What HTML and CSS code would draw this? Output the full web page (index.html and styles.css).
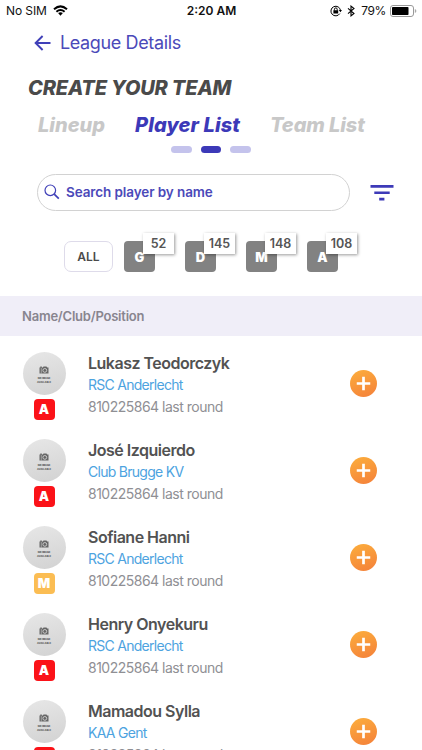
FILE: index.html
```html
<!DOCTYPE html>
<html lang="en">
<head>
    <meta charset="UTF-8">
    <meta name="viewport" content="width=device-width, initial-scale=1.0">
    <title>League Details</title>
    <link rel="stylesheet" href="styles.css">
</head>
<body>
    <!-- Shared icons -->
    <svg class="icon-defs" width="0" height="0">
        <symbol id="camera" viewBox="0 0 10 8">
            <path fill="#666" d="M.5 1.5h.8V.6h1.5v.9h1L4.5.5h3l.7 1h1.3V7.5H.5z"/>
            <circle cx="5.8" cy="4.4" r="1.9" fill="none" stroke="#ddd" stroke-width=".8"/>
            <path stroke="#ddd" stroke-width=".5" d="M2.3 2v5.5"/>
        </symbol>
        <symbol id="plus" viewBox="0 0 28 28">
            <path stroke="#fff" stroke-width="2.8" d="M14 7v14M7 14h14"/>
        </symbol>
    </svg>

    <div class="status-bar">
        <div class="carrier">
            <span>No SIM</span>
            <svg width="15" height="11" viewBox="0 0 15 11" fill="none" stroke="#000" stroke-width="2">
                <path d="M1 4.2Q7.5-1.4 14 4.2"/>
                <path d="M3.4 6.7Q7.5 3.2 11.6 6.7"/>
                <path fill="#000" stroke="none" d="M5.1 8.1Q7.5 6.2 9.9 8.1L7.5 10.7z"/>
            </svg>
        </div>
        <div class="clock">2:20 AM</div>
        <div class="indicators">
            <svg width="12" height="12" viewBox="0 0 12 12" fill="none" stroke="#000">
                <path d="M9.8 8.6A4.8 4.8 0 1 1 10.5 5.5"/>
                <path fill="#000" stroke="none" d="M8.8 5h3.2l-1.6 2.2zM3.4 5.3h4.8v3.3H3.4z"/>
                <path d="M4.4 5.5V4.3a1.4 1.4 0 0 1 2.8 0v1.2"/>
            </svg>
            <svg class="bluetooth" width="8" height="12" viewBox="0 0 8 12" fill="none" stroke="#000" stroke-width="1.1">
                <path d="M1 3.3l6 5.2-3 2.4V1.1l3 2.4-6 5.2"/>
            </svg>
            <span class="percent">79%</span>
            <svg width="27" height="12" viewBox="0 0 27 12">
                <rect x=".5" y=".5" width="23" height="11" rx="2.5" fill="#fff" stroke="#999"/>
                <rect x="2" y="2" width="16.5" height="8" rx=".8"/>
                <path fill="#aaa" d="M24.8 4q1.6.6 1.6 2t-1.6 2z"/>
            </svg>
        </div>
    </div>

    <div class="nav">
        <svg width="17" height="16" viewBox="0 0 17 16" fill="none" stroke="#4040b8" stroke-width="1.9">
            <path d="M16.5 8H2M8.6 1L1.6 8l7 7"/>
        </svg>
        <span>League Details</span>
    </div>

    <h1 class="title">CREATE YOUR TEAM</h1>

    <div class="tabs">
        <span class="tab lineup">Lineup</span>
        <span class="tab active">Player List</span>
        <span class="tab team">Team List</span>
    </div>
    <div class="dots">
        <i></i><i class="current"></i><i></i>
    </div>

    <div class="search-row">
        <div class="search">
            <svg width="16" height="16" viewBox="0 0 16 16" fill="none" stroke="#4040b8" stroke-width="1.2">
                <circle cx="6.3" cy="6.3" r="5.3"/>
                <path stroke-width="1.7" d="M10.2 10.2l4.6 4.4"/>
            </svg>
            <span>Search player by name</span>
        </div>
        <svg class="filter" width="24" height="16" viewBox="0 0 24 16" fill="#3d3ab8">
            <path d="M.5 0h23v2.8H.5zM4.3 6.4h15.4v2.7H4.3zM9.2 12.8h5.2v2.7H9.2z"/>
        </svg>
    </div>

    <div class="filters">
        <div class="all">ALL</div>
        <div class="position">G<span class="count">52</span></div>
        <div class="position">D<span class="count">145</span></div>
        <div class="position">M<span class="count">148</span></div>
        <div class="position">A<span class="count">108</span></div>
    </div>

    <div class="list-header">Name/Club/Position</div>

    <div class="players">
        <div class="player">
            <div class="picture">
                <div class="avatar"><svg><use href="#camera"/></svg><small>NO IMAGE<br>AVAILABLE</small></div>
                <div class="role">A</div>
            </div>
            <div class="info">
                <div class="name">Lukasz Teodorczyk</div>
                <div class="club">RSC Anderlecht</div>
                <div class="score">810225864 last round</div>
            </div>
            <div class="add"><svg><use href="#plus"/></svg></div>
        </div>
        <div class="player">
            <div class="picture">
                <div class="avatar"><svg><use href="#camera"/></svg><small>NO IMAGE<br>AVAILABLE</small></div>
                <div class="role">A</div>
            </div>
            <div class="info">
                <div class="name">José Izquierdo</div>
                <div class="club">Club Brugge KV</div>
                <div class="score">810225864 last round</div>
            </div>
            <div class="add"><svg><use href="#plus"/></svg></div>
        </div>
        <div class="player">
            <div class="picture">
                <div class="avatar"><svg><use href="#camera"/></svg><small>NO IMAGE<br>AVAILABLE</small></div>
                <div class="role midfielder">M</div>
            </div>
            <div class="info">
                <div class="name">Sofiane Hanni</div>
                <div class="club">RSC Anderlecht</div>
                <div class="score">810225864 last round</div>
            </div>
            <div class="add"><svg><use href="#plus"/></svg></div>
        </div>
        <div class="player">
            <div class="picture">
                <div class="avatar"><svg><use href="#camera"/></svg><small>NO IMAGE<br>AVAILABLE</small></div>
                <div class="role">A</div>
            </div>
            <div class="info">
                <div class="name">Henry Onyekuru</div>
                <div class="club">RSC Anderlecht</div>
                <div class="score">810225864 last round</div>
            </div>
            <div class="add"><svg><use href="#plus"/></svg></div>
        </div>
        <div class="player">
            <div class="picture">
                <div class="avatar"><svg><use href="#camera"/></svg><small>NO IMAGE<br>AVAILABLE</small></div>
                <div class="role">A</div>
            </div>
            <div class="info">
                <div class="name">Mamadou Sylla</div>
                <div class="club">KAA Gent</div>
                <div class="score">810225864 last round</div>
            </div>
            <div class="add"><svg><use href="#plus"/></svg></div>
        </div>
    </div>
</body>
</html>
```
FILE: styles.css
```css
* {
    box-sizing: border-box;
}

body {
    margin: 0;
    height: 750px;
    overflow: hidden;
    display: flex;
    flex-direction: column;
    background-color: #fff;
    font-family: Inter, "Liberation Sans", sans-serif;
    white-space: nowrap;
}

body > * {
    flex-shrink: 0;
}

svg {
    display: block;
    flex-shrink: 0;
}

.icon-defs {
    position: absolute;
}

.status-bar {
    height: 21px;
    padding: 0 5px 0 6px;
    display: grid;
    grid-template-columns: 1fr auto 1fr;
    align-items: center;
    font-size: 12px;
    color: #111;
}

.carrier,
.indicators {
    display: flex;
    align-items: center;
}

.carrier {
    gap: 6px;
    letter-spacing: -0.1px;
}

.clock {
    font-size: 12px;
    font-weight: 600;
}

.indicators {
    justify-content: flex-end;
}

.bluetooth {
    margin: 0 6px 0 5px;
}

.percent {
    margin-right: 4px;
    letter-spacing: -0.4px;
}

.nav {
    height: 43px;
    padding-left: 34px;
    display: flex;
    align-items: center;
    gap: 9px;
    font-size: 18px;
    letter-spacing: -0.37px;
    color: #4b49b9;
}

.title {
    margin: 9px 0 0 28px;
    height: 30px;
    line-height: 30px;
    font-size: 20px;
    font-weight: 800;
    font-style: italic;
    letter-spacing: -0.18px;
    color: #4a4a4a;
}

.tabs {
    height: 34px;
    margin-top: 5px;
    padding-left: 38px;
    display: flex;
    align-items: center;
    font-size: 20px;
    font-weight: 800;
    font-style: italic;
    color: #c8c8c8;
}

.lineup {
    width: 97px;
}

.active {
    width: 135px;
    color: #3c39b8;
    letter-spacing: 0.1px;
}

.team {
    letter-spacing: -0.1px;
}

.dots {
    margin: 4px 0 0 171px;
    display: flex;
    gap: 9px;
}

.dots i {
    width: 20.5px;
    height: 7px;
    border-radius: 4px;
    background-color: #c4c3ec;
}

.dots .current {
    background-color: #3c39b8;
}

.search-row {
    margin: 21px 28px 0 37px;
    display: flex;
    align-items: center;
    justify-content: space-between;
}

.search {
    width: 313px;
    height: 37px;
    padding: 0 0 1px 6px;
    border: 1px solid #d2d2d2;
    border-radius: 19px;
    display: flex;
    align-items: center;
    gap: 6px;
    font-size: 13.5px;
    font-weight: 600;
    letter-spacing: -0.1px;
    color: #4b49b9;
}

.filters {
    margin: 30px 0 0 64px;
    display: flex;
}

.all {
    width: 49px;
    height: 31px;
    line-height: 29px;
    margin-right: 11px;
    border: 1px solid #dedbea;
    border-radius: 7px;
    text-align: center;
    font-size: 12px;
    font-weight: 600;
    color: #4a4a4a;
}

.position {
    position: relative;
    width: 31px;
    height: 31px;
    line-height: 32px;
    margin-right: 30px;
    border-radius: 4px;
    background-color: #828282;
    color: #fff;
    text-align: center;
    font-size: 13px;
    font-weight: 900;
}

/* Number of players in the position */
.count {
    position: absolute;
    top: -8px;
    left: 19px;
    width: 31px;
    height: 21px;
    line-height: 21px;
    background-color: #fff;
    box-shadow: 1px 1px 3px rgba(0, 0, 0, 0.4);
    color: #555;
    font-size: 12.5px;
    font-weight: 600;
}

.list-header {
    height: 40px;
    line-height: 40px;
    margin-top: 24px;
    padding-left: 22px;
    background-color: #f0eef8;
    color: #88858f;
    font-size: 13px;
    font-weight: 600;
    letter-spacing: -0.22px;
}

.players {
    padding-top: 16px;
}

.player {
    height: 87px;
    padding: 0 45px 0 22px;
    display: flex;
}

.picture {
    width: 44px;
    display: flex;
    flex-direction: column;
    align-items: center;
}

.avatar {
    width: 43px;
    height: 43px;
    border-radius: 50%;
    background: linear-gradient(165deg, #e7e7e7, #d2d2d2);
    display: flex;
    flex-direction: column;
    align-items: center;
    padding-top: 14px;
}

.avatar svg {
    width: 10px;
    height: 8px;
}

.avatar small {
    margin-top: 3px;
    font-size: 2.5px;
    line-height: 3.5px;
    font-weight: 800;
    text-align: center;
    color: #555;
}

.role {
    width: 21px;
    height: 21px;
    line-height: 21px;
    margin-top: 4px;
    border-radius: 4px;
    background-color: #fb1218;
    color: #fff;
    text-align: center;
    font-size: 13px;
    font-weight: 900;
}

.midfielder {
    background-color: #fbbd53;
}

.info {
    flex: 1;
    padding-left: 22px;
    font-size: 14px;
    line-height: 21.5px;
    color: #8f8f94;
}

.name {
    font-size: 16px;
    font-weight: 600;
    letter-spacing: -0.5px;
    line-height: 22px;
    color: #525252;
}

.club {
    letter-spacing: -0.72px;
    color: #4da3df;
}

.score {
    letter-spacing: -0.5px;
}

.add {
    width: 27px;
    height: 27px;
    margin-top: 18px;
    border-radius: 50%;
    background: linear-gradient(160deg, #fcae3c, #f4803a);
}

.add svg {
    width: 27px;
    height: 27px;
}
```
